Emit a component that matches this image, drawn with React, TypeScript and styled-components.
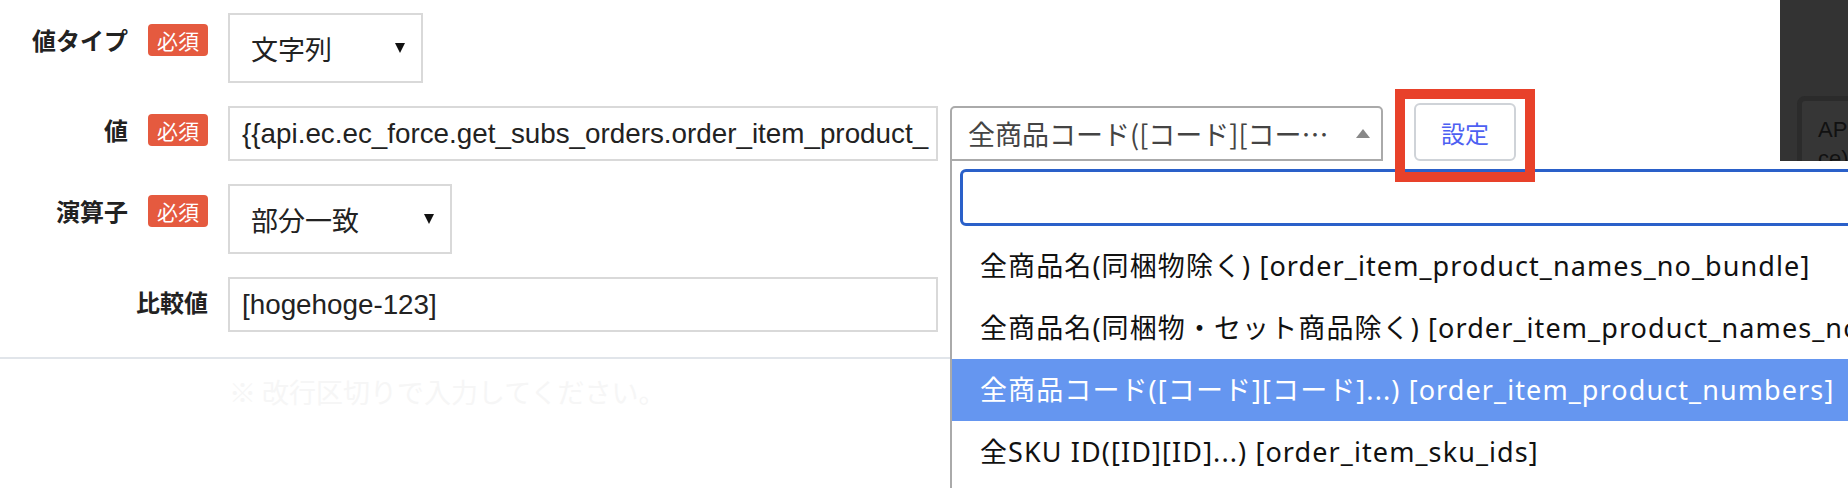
import React from "react";
import styled, { createGlobalStyle } from "styled-components";

const GlobalStyle = createGlobalStyle`
  html, body {
    margin: 0;
    padding: 0;
    background: #fff;
  }
  body {
    font-family: "Noto Sans CJK JP", "Noto Sans", sans-serif;
  }
`;

const options = [
  "全商品名(同梱物除く) [order_item_product_names_no_bundle]",
  "全商品名(同梱物・セット商品除く) [order_item_product_names_no_bundle_no_set]",
  "全商品コード([コード][コード]...) [order_item_product_numbers]",
  "全SKU ID([ID][ID]...) [order_item_sku_ids]",
];

const App = () => {
  return (
    <Page>
      <GlobalStyle />
      <Form>
        <Row>
          <LabelCell $offset={11}>
            <LabelText>値タイプ</LabelText>
            <Badge>必須</Badge>
          </LabelCell>
          <SelectBox $width={195}>
            <span>文字列</span>
            <DownArrow />
          </SelectBox>
        </Row>

        <Row>
          <LabelCell $offset={8}>
            <LabelText>値</LabelText>
            <Badge>必須</Badge>
          </LabelCell>
          <TextBox>{"{{api.ec.ec_force.get_subs_orders.order_item_product_"}</TextBox>
          <Combo>
            <ComboSelection>
              <ComboText>全商品コード([コード][コード]...) [order_item_product_numbers]</ComboText>
              <UpArrow />
            </ComboSelection>
            <Dropdown>
              <SearchWrap>
                <SearchField />
              </SearchWrap>
              <OptionList>
                {options.map((opt, i) => (
                  <Option key={opt} $active={i === 2}>
                    {opt}
                  </Option>
                ))}
              </OptionList>
            </Dropdown>
          </Combo>
          <SetButton>設定</SetButton>
        </Row>

        <Row>
          <LabelCell $offset={11}>
            <LabelText>演算子</LabelText>
            <Badge>必須</Badge>
          </LabelCell>
          <SelectBox $width={224}>
            <span>部分一致</span>
            <DownArrow />
          </SelectBox>
        </Row>

        <Row>
          <LabelCell $offset={9}>
            <LabelText>比較値</LabelText>
          </LabelCell>
          <TextBox>[hogehoge-123]</TextBox>
        </Row>
      </Form>

      <Separator />
      <Note>※ 改行区切りで入力してください。</Note>

      <SidePanel>
        <SideCard>
          <div>APIリクエスト</div>
          <div>ce)</div>
        </SideCard>
      </SidePanel>

      <Highlight />
    </Page>
  );
};

export default App;

const Page = styled.div`
  position: relative;
  width: 1848px;
  height: 488px;
  overflow: hidden;
  background: #fff;
`;

const Form = styled.div`
  display: flex;
  flex-direction: column;
  gap: 23px;
  padding-top: 13px;
`;

const Row = styled.div`
  display: flex;
  align-items: flex-start;
`;

const LabelCell = styled.div<{ $offset: number }>`
  box-sizing: border-box;
  flex-shrink: 0;
  width: 208px;
  margin-right: 20px;
  padding-top: ${({ $offset }) => $offset}px;
  display: flex;
  justify-content: flex-end;
  align-items: center;
  gap: 20px;
`;

const LabelText = styled.span`
  font-size: 24px;
  font-weight: 700;
  line-height: 32px;
  color: #222;
`;

const Badge = styled.span`
  width: 60px;
  height: 32px;
  border-radius: 4px;
  background: #e55a3f;
  color: #fff;
  font-size: 21px;
  line-height: 32px;
  text-align: center;
`;

const SelectBox = styled.div<{ $width: number }>`
  box-sizing: border-box;
  width: ${({ $width }) => $width}px;
  height: 70px;
  border: 2px solid #d9d9d9;
  padding: 0 16px 0 21px;
  display: flex;
  align-items: center;
  justify-content: space-between;
  font-size: 27px;
  color: #222;
`;

const DownArrow = styled.span`
  width: 0;
  height: 0;
  border-left: 5.5px solid transparent;
  border-right: 5.5px solid transparent;
  border-top: 10px solid #111;
`;

const TextBox = styled.div`
  box-sizing: border-box;
  flex-shrink: 0;
  width: 710px;
  height: 55px;
  border: 2px solid #d9d9d9;
  padding: 0 12px;
  display: flex;
  align-items: center;
  font-family: "Liberation Sans", Arial, sans-serif;
  font-size: 27.8px;
  color: #222;
  white-space: nowrap;
  overflow: hidden;
`;

const Combo = styled.div`
  position: relative;
  flex-shrink: 0;
  width: 433px;
  margin-left: 12px;
`;

const ComboSelection = styled.div`
  box-sizing: border-box;
  height: 55px;
  border: 2px solid #aaa;
  border-radius: 5px 5px 0 0;
  padding: 0 11px 0 16px;
  display: flex;
  align-items: center;
  gap: 14px;
`;

const ComboText = styled.span`
  flex: 1;
  min-width: 0;
  overflow: hidden;
  white-space: nowrap;
  text-overflow: ellipsis;
  font-size: 27px;
  color: #444;
`;

const UpArrow = styled.span`
  width: 0;
  height: 0;
  border-left: 7.5px solid transparent;
  border-right: 7.5px solid transparent;
  border-bottom: 9px solid #888;
`;

const Dropdown = styled.div`
  position: absolute;
  top: 55px;
  left: 0;
  z-index: 5;
  width: 1000px;
  height: 360px;
  background: #fff;
  border-left: 2px solid #aaa;
`;

const SearchWrap = styled.div`
  padding: 8px 0 9px 8px;
`;

const SearchField = styled.div`
  box-sizing: border-box;
  height: 57px;
  border: 3px solid #2a60c9;
  border-radius: 6px;
  background: #fff;
`;

const OptionList = styled.div`
  display: flex;
  flex-direction: column;
`;

const Option = styled.div<{ $active?: boolean }>`
  height: 62px;
  line-height: 62px;
  padding-left: 28px;
  white-space: nowrap;
  font-family: "Noto Sans", "Noto Sans CJK JP", sans-serif;
  font-size: 27px;
  letter-spacing: 1.1px;
  color: ${({ $active }) => ($active ? "#fff" : "#111")};
  background: ${({ $active }) => ($active ? "#6596f0" : "transparent")};
`;

const SetButton = styled.button`
  box-sizing: border-box;
  flex-shrink: 0;
  width: 102px;
  height: 58px;
  margin-left: 31px;
  margin-top: -3px;
  border: 2px solid #cfd3d8;
  border-radius: 6px;
  background: #fff;
  color: #4d60f2;
  font-family: "Noto Sans CJK JP", sans-serif;
  font-size: 24px;
  padding: 0;
`;

const Separator = styled.div`
  height: 2px;
  margin-top: 25px;
  background: #e1e5ea;
`;

const Note = styled.div`
  margin-top: 13px;
  padding-left: 229px;
  font-size: 27px;
  line-height: 40px;
  color: #f6f6f6;
`;

const SidePanel = styled.div`
  position: absolute;
  top: 0;
  left: 1780px;
  z-index: 1;
  width: 120px;
  height: 162px;
  background: #333;
`;

const SideCard = styled.div`
  position: absolute;
  top: 96px;
  left: 17px;
  width: 300px;
  height: 120px;
  box-sizing: border-box;
  border: 5px solid #2b2b2b;
  border-radius: 8px;
  background: #363636;
  padding: 14px 0 0 16px;
  font-family: "Liberation Sans", Arial, sans-serif;
  font-size: 22px;
  line-height: 29px;
  color: #111;
  white-space: nowrap;
`;

const Highlight = styled.div`
  position: absolute;
  top: 89px;
  left: 1395px;
  z-index: 10;
  box-sizing: border-box;
  width: 140px;
  height: 93px;
  border: 10px solid #e8412a;
`;
